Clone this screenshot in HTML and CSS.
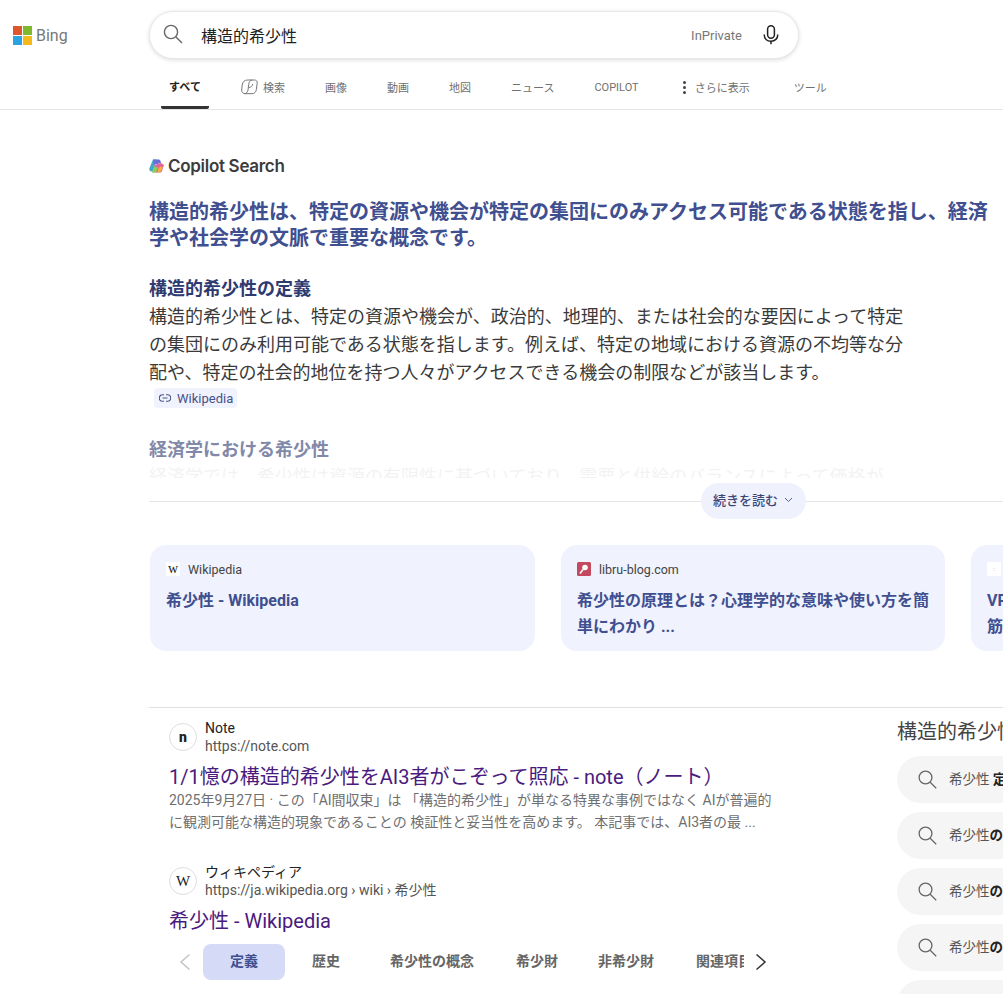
FILE: index.html
```html
<!DOCTYPE html>
<html lang="ja">
<head>
  <meta charset="UTF-8" />
  <title>構造的希少性 - Bing</title>
  <link rel="stylesheet" href="styles.css">
</head>
<body>

<!-- Header -->
<div class="header">
  <div class="logo">
    <svg width="19" height="19" viewBox="0 0 19 19">
      <rect x="0" y="0" width="9" height="9" fill="#e0562b"/>
      <rect x="10" y="0" width="9" height="9" fill="#7fb72d"/>
      <rect x="0" y="10" width="9" height="9" fill="#2ba3e0"/>
      <rect x="10" y="10" width="9" height="9" fill="#f5b91c"/>
    </svg>
    <span>Bing</span>
  </div>
  <div class="search-box">
    <svg class="search-icon" width="20" height="20" viewBox="0 0 20 20" fill="none" stroke="#666" stroke-width="1.4">
      <circle cx="8" cy="8" r="6.6"/>
      <path d="M13 13l6 6"/>
    </svg>
    <div class="query">構造的希少性</div>
    <div class="inprivate">InPrivate</div>
    <svg class="mic" width="16" height="20" viewBox="0 0 16 20" fill="none" stroke="#222" stroke-width="1.5">
      <rect x="4.6" y="0.8" width="6.8" height="12.4" rx="3.4"/>
      <path d="M1.2 9.5c0 4 2.8 6.8 6.8 6.8s6.8-2.8 6.8-6.8"/>
      <path d="M8 16.3v2.9"/>
    </svg>
  </div>
</div>

<!-- Tabs -->
<div class="tabs">
  <div class="tab active">すべて</div>
  <div class="tab tab-search">
    <svg width="17" height="16" viewBox="0 0 17 16" fill="none" stroke="#777" stroke-width="1">
      <path d="M6.500 1h7c1.800 0 3 1.300 2.700 3.200l-.9 6.500c-.4 2.500-2 4-4.300 4H4.500c-2.300 0-4-1.500-3.800-3.700l.5-5C1.500 3 3.500 1 6.500 1z"/>
      <path d="M11 1C9 1.500 8 3 7.700 5.500l-.6 5c-.3 2.500-1.600 4-3.600 4.200"/>
      <path d="M8 8.500c2-.2 3.400-1.500 3.800-3.500"/>
    </svg>
    検索
  </div>
  <div class="tab tab-image">画像</div>
  <div class="tab tab-video">動画</div>
  <div class="tab tab-map">地図</div>
  <div class="tab tab-news">ニュース</div>
  <div class="tab tab-copilot">COPILOT</div>
  <div class="tab tab-more"><span class="dots"><i></i><i></i><i></i></span>さらに表示</div>
  <div class="tab tab-tools">ツール</div>
</div>

<!-- Copilot answer -->
<div class="main">
  <div class="copilot-title">
    <svg width="16" height="16" viewBox="0 0 16 16">
      <path d="M4 1.500h4L5.500 8 4 13.500H2.500C1 13.500 0 12 .3 10.500z" fill="#3fa9c9"/>
      <path d="M4 1.500h5.500c1 0 1.800.5 2 1.500l.5 2-4 1-3 1z" fill="#6a6fd8"/>
      <path d="M5 8l3-2 4-1 3 2-2 6c-.5 1-1.200 1.500-2.200 1.500H6z" fill="#e0669a"/>
      <path d="M3 14.500c1 .3 3 .3 4 0l2-5-4-1z" fill="#8ccf5a"/>
      <path d="M9 14.500h2l3-5-3-1-2 3z" fill="#f3b03d"/>
    </svg>
    <span>Copilot Search</span>
  </div>

  <h1 class="answer-head">構造的希少性は、特定の資源や機会が特定の集団にのみアクセス可能である状態を指し、経済学や社会学の文脈で重要な概念です。</h1>

  <div class="answer-body">
    <h2>構造的希少性の定義</h2>
    <p>構造的希少性とは、特定の資源や機会が、政治的、地理的、または社会的な要因によって特定の集団にのみ利用可能である状態を指します。例えば、特定の地域における資源の不均等な分配や、特定の社会的地位を持つ人々がアクセスできる機会の制限などが該当します。</p>
    <div class="cite">
      <svg width="12" height="8" viewBox="0 0 12 8" fill="none" stroke="#4a5488" stroke-width="1.100">
        <path d="M5 .8H3.500a3.200 3.200 0 0 0 0 6.400H5M7 .8h1.500a3.200 3.200 0 0 1 0 6.400H7M3.500 4h5"/>
      </svg>
      Wikipedia
    </div>
    <h2 class="faded-head">経済学における希少性</h2>
    <p class="faded-text">経済学では、希少性は資源の有限性に基づいており、需要と供給のバランスによって価格が</p>
  </div>

  <div class="read-more">
    <div class="read-more-btn">続きを読む
      <svg width="9" height="6" viewBox="0 0 9 6" fill="none" stroke="#555d88" stroke-width="1"><path d="M1 1l3.500 3.500L8 1"/></svg>
    </div>
  </div>

  <div class="cards">
    <div class="card">
      <div class="card-source"><span class="favicon fav-w">w</span>Wikipedia</div>
      <div class="card-title">希少性 - Wikipedia</div>
    </div>
    <div class="card">
      <div class="card-source">
        <svg class="favicon" width="14" height="14" viewBox="0 0 14 14">
          <rect width="14" height="14" rx="1.500" fill="#c4485f"/>
          <circle cx="8" cy="5.500" r="2.800" fill="#fff"/>
          <path d="M6 7.500L3 11.500" stroke="#fff" stroke-width="1.600"/>
        </svg>
        libru-blog.com
      </div>
      <div class="card-title">希少性の原理とは？心理学的な意味や使い方を簡単にわかり ...</div>
    </div>
    <div class="card">
      <div class="card-source"><span class="favicon fav-blank">::</span></div>
      <div class="card-title">VPN<br>筋</div>
    </div>
  </div>

  <div class="lower">
    <div class="results">
      <div class="result result-note">
        <div class="result-site">
          <div class="site-icon icon-n">n</div>
          <div>
            <div class="site-name">Note</div>
            <div class="site-url">https://note.com</div>
          </div>
        </div>
        <div class="result-title">1/1憶の構造的希少性をAI3者がこぞって照応 - note（ノート）</div>
        <div class="snippet">2025年9月27日 · この「AI間収束」は 「構造的希少性」が単なる特異な事例ではなく AIが普遍的<br>に観測可能な構造的現象であることの 検証性と妥当性を高めます。 本記事では、AI3者の最 ...</div>
      </div>
      <div class="result">
        <div class="result-site">
          <div class="site-icon icon-w">W</div>
          <div>
            <div class="site-name">ウィキペディア</div>
            <div class="site-url">https://ja.wikipedia.org › wiki › 希少性</div>
          </div>
        </div>
        <div class="result-title">希少性 - Wikipedia</div>
        <div class="pills">
          <svg width="12" height="18" viewBox="0 0 12 18" fill="none" stroke="#c4c4c4" stroke-width="1.500"><path d="M10.500 1.500L2 9l8.500 7.500"/></svg>
          <div class="pill current">定義</div>
          <div class="pill p-history">歴史</div>
          <div class="pill p-concept">希少性の概念</div>
          <div class="pill p-goods">希少財</div>
          <div class="pill p-nongoods">非希少財</div>
          <div class="pill p-related">関連項目</div>
          <svg class="pill-next" width="12" height="18" viewBox="0 0 12 18" fill="none" stroke="#333" stroke-width="1.500"><path d="M1.500 1.500L10 9l-8.500 7.500"/></svg>
        </div>
      </div>
    </div>

    <div class="side">
      <div class="side-title">構造的希少性の定義</div>
      <div class="side-item"><svg width="19" height="19" viewBox="0 0 19 19" fill="none" stroke="#666" stroke-width="1.300"><circle cx="7.500" cy="7.500" r="6.400"/><path d="M12.200 12.200l6 6"/></svg><span>希少性 <b>定義</b></span></div>
      <div class="side-item"><svg width="19" height="19" viewBox="0 0 19 19" fill="none" stroke="#666" stroke-width="1.300"><circle cx="7.500" cy="7.500" r="6.400"/><path d="M12.200 12.200l6 6"/></svg><span>希少性<b>の原理</b></span></div>
      <div class="side-item"><svg width="19" height="19" viewBox="0 0 19 19" fill="none" stroke="#666" stroke-width="1.300"><circle cx="7.500" cy="7.500" r="6.400"/><path d="M12.200 12.200l6 6"/></svg><span>希少性<b>の例</b></span></div>
      <div class="side-item"><svg width="19" height="19" viewBox="0 0 19 19" fill="none" stroke="#666" stroke-width="1.300"><circle cx="7.500" cy="7.500" r="6.400"/><path d="M12.200 12.200l6 6"/></svg><span>希少性<b>の意味</b></span></div>
      <div class="side-item"></div>
    </div>
  </div>
</div>

</body>
</html>
```
FILE: styles.css
```css
html, body {
  margin: 0;
  height: 994px;
  overflow: hidden;
}

body {
  font-family: Roboto, "Noto Sans CJK JP", sans-serif;
  background-color: #fff;
  color: #222;
}

/* Header */
.header {
  display: flex;
  align-items: flex-start;
  padding-top: 11px;
  height: 48px;
}

.logo {
  display: flex;
  align-items: center;
  width: 136px;
  height: 48px;
  margin-left: 13px;
  gap: 4px;
  color: #777;
  font-size: 16px;
}

.search-box {
  display: flex;
  align-items: center;
  box-sizing: border-box;
  width: 650px;
  height: 48px;
  padding: 0 19px 0 13px;
  background-color: #fff;
  border: 1px solid #e8e8e8;
  border-radius: 24px;
  box-shadow: 0 1px 4px rgba(0, 0, 0, .14);
}

.search-icon { flex: none; margin-bottom: 2px; }
.query { flex: 1; margin-left: 18px; font-size: 16px; color: #222; }
.inprivate { font-size: 13px; color: #777; margin-right: 21px; }

/* Tabs */
.tabs {
  display: flex;
  height: 51px;
  box-sizing: border-box;
  padding-left: 161px;
  border-bottom: 1px solid #e5e5e5;
  font-size: 11px;
  color: #707070;
}

.tab {
  display: flex;
  align-items: center;
  gap: 5px;
  height: 50px;
  box-sizing: border-box;
  padding-top: 6px;
  white-space: nowrap;
}

.tab.active {
  justify-content: center;
  width: 48px;
  color: #222;
  font-weight: 700;
  border-bottom: 3px solid #333;
  border-radius: 0 0 2px 2px;
}

.tab-search { margin-left: 32px; }
.tab-image { margin-left: 40px; }
.tab-video { margin-left: 40px; }
.tab-map { margin-left: 40px; }
.tab-news { margin-left: 40px; }
.tab-copilot { margin-left: 40px; }
.tab-more { margin-left: 44px; gap: 9px; }
.tab-tools { margin-left: 44px; }

.dots { display: flex; flex-direction: column; gap: 2px; }
.dots i { display: block; width: 3px; height: 3px; border-radius: 50%; background-color: #444; }

/* Copilot answer */
.main { padding-left: 149px; }

.copilot-title {
  display: flex;
  align-items: center;
  gap: 3px;
  margin-top: 44px;
  height: 24px;
  font-family: Inter, Roboto, sans-serif;
  font-size: 17px;
  font-weight: 600;
  letter-spacing: -.3px;
  color: #3c3c3c;
}

.answer-head {
  width: 842px;
  margin: 21px 0 0;
  font-size: 20px;
  line-height: 26px;
  font-weight: 700;
  color: #3f4f8f;
}

.answer-body {
  margin: 25px 0 0;
  width: 760px;
  height: 209px;
  overflow: hidden;
}

.answer-body h2 {
  margin: 0;
  font-size: 18px;
  line-height: 26px;
  font-weight: 700;
  color: #2e3a70;
}

.answer-body p {
  margin: 1px 0 0;
  font-size: 18px;
  line-height: 28px;
  color: #3a3a3a;
}

.cite {
  display: inline-flex;
  align-items: center;
  gap: 6px;
  height: 20px;
  margin: 1px 0 0 5px;
  padding: 0 4px 0 5px;
  background-color: #f0f2fd;
  border-radius: 4px;
  font-size: 13px;
  color: #47518a;
}

.answer-body .faded-head {
  margin-top: 29px;
  opacity: .6;
}

.answer-body .faded-text {
  margin-top: 0;
  height: 15px;
  overflow: hidden;
  white-space: nowrap;
  opacity: .06;
}

.read-more {
  display: flex;
  align-items: center;
  margin-top: -2px;
  height: 36px;
  width: 854px;
  background: linear-gradient(#e5e5e5, #e5e5e5) no-repeat center / 100% 1px;
}

.read-more-btn {
  display: flex;
  align-items: center;
  gap: 6px;
  box-sizing: border-box;
  width: 105px;
  height: 36px;
  margin-left: 552px;
  padding: 0 0 3px 12px;
  background-color: #eff1fd;
  border-radius: 18px;
  font-size: 13px;
  font-weight: 500;
  color: #3b4577;
}

/* Cards */
.cards {
  display: flex;
  gap: 26px;
  width: 1100px;
  margin: 26px 0 0 1px;
}

.card {
  box-sizing: border-box;
  flex: none;
  width: 385px;
  height: 106px;
  padding: 15px 16px 0 16px;
  background-color: #f0f2fe;
  border-radius: 16px;
}

.card:nth-child(2) { width: 384px; }

.card-source {
  display: flex;
  align-items: center;
  gap: 8px;
  height: 18px;
  font-size: 12.500px;
  color: #444;
}

.favicon { flex: none; width: 14px; height: 14px; }

.fav-w {
  background-color: #fff;
  font-family: "Liberation Serif", serif;
  font-size: 14px;
  line-height: 13px;
  text-align: center;
  color: #222;
}

.fav-blank {
  background-color: #fff;
  font-size: 6px;
  line-height: 14px;
  text-align: center;
  color: #bbb;
}

.card-title {
  margin-top: 10px;
  font-size: 16px;
  line-height: 26px;
  font-weight: 700;
  color: #3f4f8f;
}

/* Web results */
.lower {
  display: flex;
  width: 1000px;
  margin-top: 56px;
  border-top: 1px solid #e0e0e0;
}

.results {
  flex: none;
  box-sizing: border-box;
  width: 748px;
  padding-left: 20px;
}

.result-note { height: 144px; padding-top: 11px; }

.result-site {
  display: flex;
  align-items: center;
  gap: 8px;
  height: 36px;
}

.site-icon {
  flex: none;
  box-sizing: border-box;
  width: 28px;
  height: 28px;
  border: 1px solid #ddd;
  border-radius: 50%;
  text-align: center;
  line-height: 26px;
  color: #222;
}

.icon-n { font-size: 14px; font-weight: 900; }
.icon-w { font-family: "Liberation Serif", serif; font-size: 15px; }

.site-name { font-size: 14px; line-height: 18px; color: #222; }
.site-url { font-size: 14px; line-height: 18px; color: #555; }

.result-title {
  margin-top: 11px;
  font-size: 20px;
  line-height: 23px;
  color: #4a1a7e;
  white-space: nowrap;
}

.snippet {
  width: 640px;
  font-size: 14px;
  line-height: 22px;
  color: #6f6f6f;
  white-space: nowrap;
}

.pills {
  display: flex;
  align-items: center;
  margin: 11px 0 0 10px;
  height: 36px;
  font-size: 14px;
  font-weight: 700;
  color: #666;
}

.pill { flex: none; white-space: nowrap; margin-bottom: 4px; }

.pill.current {
  width: 82px;
  height: 36px;
  margin: 0 0 0 12px;
  background-color: #d5dbf7;
  border-radius: 8px;
  color: #3f4f8f;
  text-align: center;
  line-height: 34px;
}

.p-history { margin-left: 27px; }
.p-concept { margin-left: 50px; }
.p-goods { margin-left: 42px; }
.p-nongoods { margin-left: 40px; }
.p-related { margin-left: 42px; width: 48px; overflow: hidden; }
.pill-next { margin-left: 11px; flex: none; }

/* Related searches */
.side {
  flex: none;
  width: 252px;
}

.side-title {
  margin-top: 11px;
  font-size: 20px;
  line-height: 26px;
  color: #444;
  white-space: nowrap;
}

.side-item {
  display: flex;
  align-items: center;
  gap: 12px;
  box-sizing: border-box;
  height: 47px;
  margin-top: 9px;
  padding-left: 21px;
  background-color: #f5f5f5;
  border-radius: 24px;
  font-size: 13.500px;
  color: #555;
  white-space: nowrap;
}

.side-title + .side-item { margin-top: 11px; }
.side-item b { color: #222; }
.side-item span { margin-bottom: 4px; }
```
